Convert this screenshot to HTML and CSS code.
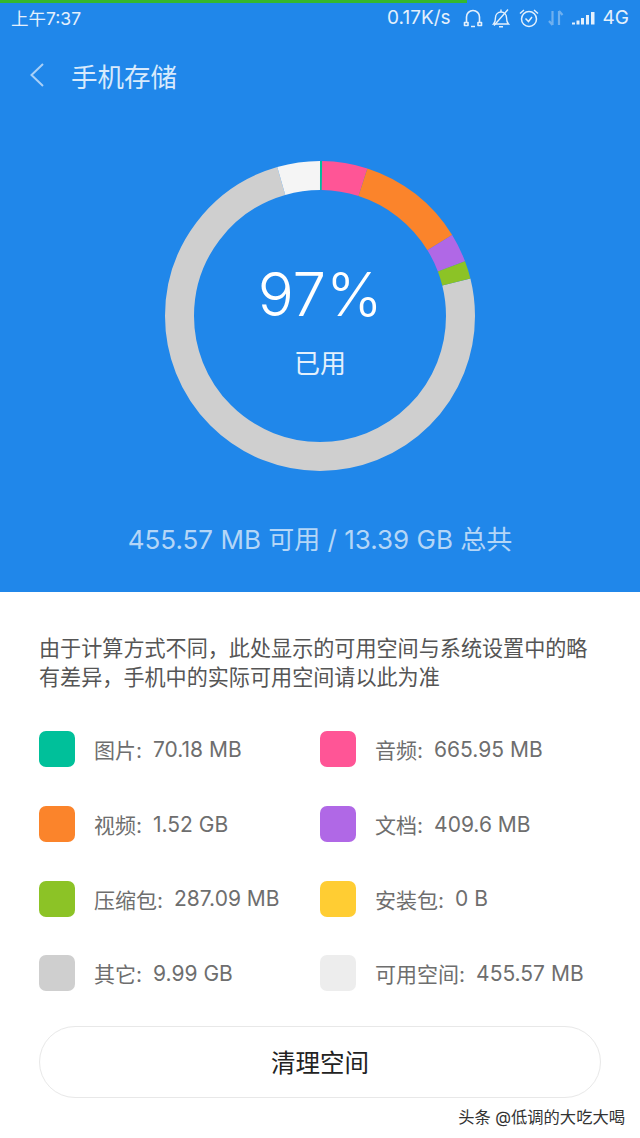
FILE: index.html
```html
<!DOCTYPE html>
<html lang="zh-CN">
<head>
  <meta charset="UTF-8">
  <meta name="viewport" content="width=device-width, initial-scale=1.0">
  <link rel="stylesheet" href="styles.css">
  <title>手机存储</title>
</head>
<body>

<div class="top-panel">
  <div class="load-bar"></div>
  <div class="status-bar">
    <span class="status-time">上午7:37</span>
    <div class="status-right">
      <span class="status-speed">0.17K/s</span>
      <svg class="status-icon" width="20" height="20" viewBox="0 0 20 20" fill="none" stroke="#e4f0fc" stroke-width="1.600">
        <path d="M3.500 14V9a6.500 6.500 0 0 1 13 0v5"/>
        <path d="M1.500 14.500h3.500v3H1.500zM15 14.500h3.500v3H15zM8 18.500h4" stroke-linejoin="round"/>
      </svg>
      <svg class="status-icon" width="20" height="20" viewBox="0 0 20 20" fill="none" stroke="#e4f0fc" stroke-width="1.400">
        <path d="M2.500 16h15c-2-2-2-3.500-2-6.500 0-3-2.300-5.500-5.500-5.500S4.500 6.500 4.500 9.500c0 3 0 4.500-2 6.500z"/>
        <path d="M8 18.700h4M3 17.500L17 1.500M10 1.500V4"/>
      </svg>
      <svg class="status-icon" width="20" height="20" viewBox="0 0 20 20" fill="none" stroke="#e4f0fc" stroke-width="1.500">
        <circle cx="10" cy="11" r="7.500"/>
        <path d="M6.500 10.500l3 3 3.500-4.500M1 5.500L5 2M19 5.500L15 2"/>
      </svg>
      <svg class="status-icon arrows" width="18" height="20" viewBox="0 0 18 20" fill="none" stroke="#6fb0ef" stroke-width="2.200">
        <path d="M5.500 3v14M2 13l3.500 4M12 17V3M12 3l3.500 4"/>
      </svg>
      <svg class="status-icon signal" width="23" height="20" viewBox="0 0 23 20" fill="#e4f0fc">
        <rect x="0" y="14.500" width="3" height="2"/>
        <rect x="4.500" y="12.500" width="3" height="4"/>
        <rect x="9" y="10" width="3" height="6.500"/>
        <rect x="14" y="7" width="3" height="9.500"/>
        <rect x="19" y="4" width="3.500" height="12.500"/>
      </svg>
      <span class="status-net">4G</span>
    </div>
  </div>

  <div class="title-bar">
    <svg class="back-icon" width="16" height="26" viewBox="0 0 16 26" fill="none" stroke="#a9d0f7" stroke-width="2">
      <path d="M14 2L2.500 13 14 24"/>
    </svg>
    <h1 class="title">手机存储</h1>
  </div>

  <div class="ring">
    <svg width="310" height="310" viewBox="0 0 310 310" fill="none" stroke-width="29">
      <g transform="rotate(-90 155 155)">
        <circle cx="155" cy="155" r="140.500" pathLength="360" stroke="#cfcfcf" stroke-dasharray="268 360" stroke-dashoffset="-76"/>
        <circle cx="155" cy="155" r="140.500" pathLength="360" stroke="#f5f5f5" stroke-dasharray="16 360" stroke-dashoffset="-344"/>
        <circle cx="155" cy="155" r="140.500" pathLength="360" stroke="#00c09a" stroke-dasharray="0.800 360"/>
        <circle cx="155" cy="155" r="140.500" pathLength="360" stroke="#ff5596" stroke-dasharray="17 360" stroke-dashoffset="-0.800"/>
        <circle cx="155" cy="155" r="140.500" pathLength="360" stroke="#fb842b" stroke-dasharray="40.700 360" stroke-dashoffset="-17.800"/>
        <circle cx="155" cy="155" r="140.500" pathLength="360" stroke="#b068e6" stroke-dasharray="10.800 360" stroke-dashoffset="-58.500"/>
        <circle cx="155" cy="155" r="140.500" pathLength="360" stroke="#8cc326" stroke-dasharray="6.700 360" stroke-dashoffset="-69.300"/>
      </g>
    </svg>
    <div class="ring-label">
      <div class="ring-percent">97%</div>
      <div class="ring-used">已用</div>
    </div>
  </div>

  <div class="capacity">455.57 MB 可用 / 13.39 GB 总共</div>
</div>

<div class="bottom-panel">
  <p class="note">由于计算方式不同，此处显示的可用空间与系统设置中的略有差异，手机中的实际可用空间请以此为准</p>

  <div class="legend">
    <div class="legend-item"><span class="swatch teal"></span><span class="legend-label">图片:</span>70.18 MB</div>
    <div class="legend-item"><span class="swatch pink"></span><span class="legend-label">音频:</span>665.95 MB</div>
    <div class="legend-item"><span class="swatch orange"></span><span class="legend-label">视频:</span>1.52 GB</div>
    <div class="legend-item"><span class="swatch purple"></span><span class="legend-label">文档:</span>409.6 MB</div>
    <div class="legend-item"><span class="swatch green"></span><span class="legend-label">压缩包:</span>287.09 MB</div>
    <div class="legend-item"><span class="swatch yellow"></span><span class="legend-label">安装包:</span>0 B</div>
    <div class="legend-item"><span class="swatch gray"></span><span class="legend-label">其它:</span>9.99 GB</div>
    <div class="legend-item"><span class="swatch light"></span><span class="legend-label">可用空间:</span>455.57 MB</div>
  </div>

  <button class="clean-button">清理空间</button>
  <div class="watermark">头条 @低调的大吃大喝</div>
</div>

</body>
</html>
```

FILE: styles.css
```css
body {
  margin: 0;
  width: 640px;
  height: 1138px;
  overflow: hidden;
  background-color: #fff;
  font-family: 'Inter', 'Noto Sans CJK SC', sans-serif;
}

.top-panel {
  height: 592px;
  background-color: #2087ea;
  color: #fff;
}

.load-bar {
  width: 467px;
  height: 3px;
  background-color: #35b82e;
}

/* Status bar */
.status-bar {
  display: flex;
  align-items: center;
  justify-content: space-between;
  height: 29px;
  padding: 0 11px;
  font-size: 17.500px;
  color: #e4f0fc;
}

.status-right {
  display: flex;
  align-items: center;
}

.status-speed {
  margin-right: 12px;
  font-size: 19px;
}

.status-icon {
  margin-right: 8px;
}

.status-icon.arrows {
  margin-right: 7px;
}

.status-icon.signal {
  margin-right: 8px;
}

.status-net {
  font-size: 19px;
}

/* Title */
.title-bar {
  display: flex;
  align-items: center;
  height: 58px;
  padding: 14px 0 0 29px;
}

.back-icon {
  margin-right: 26px;
}

.title {
  margin: 0;
  font-size: 26.500px;
  font-weight: 400;
  color: #d8eafc;
}

/* Ring */
.ring {
  position: relative;
  width: 310px;
  height: 310px;
  margin: 57px auto 0;
}

.ring-label {
  position: absolute;
  top: 0;
  left: 0;
  width: 100%;
  text-align: center;
}

.ring-percent {
  margin-top: 95px;
  font-size: 60px;
  font-weight: 300;
  line-height: 76px;
  color: #fff;
}

.ring-used {
  margin-top: 15px;
  font-size: 26px;
  line-height: 34px;
  color: #e4f0fc;
}

.capacity {
  margin-top: 52px;
  font-size: 26px;
  line-height: 34px;
  text-align: center;
  color: #b4d6f7;
}

/* Lower panel */
.bottom-panel {
  padding: 42px 39px 0;
}

.note {
  margin: 0;
  font-size: 21.100px;
  line-height: 29px;
  color: #555;
}

.legend {
  display: grid;
  grid-template-columns: 281px 1fr;
  grid-auto-rows: 74.700px;
  margin-top: 20px;
}

.legend-item {
  display: flex;
  align-items: center;
  font-size: 21px;
  color: #6e6e6e;
  white-space: nowrap;
}

.legend-label {
  margin-right: 11px;
}

.swatch {
  flex: none;
  width: 36px;
  height: 36px;
  margin-right: 19px;
  border-radius: 7px;
}

.swatch.teal { background-color: #00c09a; }
.swatch.pink { background-color: #ff5596; }
.swatch.orange { background-color: #fb842b; }
.swatch.purple { background-color: #b068e6; }
.swatch.green { background-color: #8cc326; }
.swatch.yellow { background-color: #ffcd33; }
.swatch.gray { background-color: #cfcfcf; }
.swatch.light { background-color: #ededed; }

.clean-button {
  display: block;
  width: 562px;
  height: 72px;
  margin-top: 15px;
  border: 1px solid #e8e8e8;
  border-radius: 36px;
  background-color: #fff;
  font-family: inherit;
  font-size: 24.500px;
  color: #222;
}

.watermark {
  margin-top: 9px;
  margin-right: -24px;
  font-size: 16.300px;
  line-height: 20px;
  text-align: right;
  color: #333;
}
```
